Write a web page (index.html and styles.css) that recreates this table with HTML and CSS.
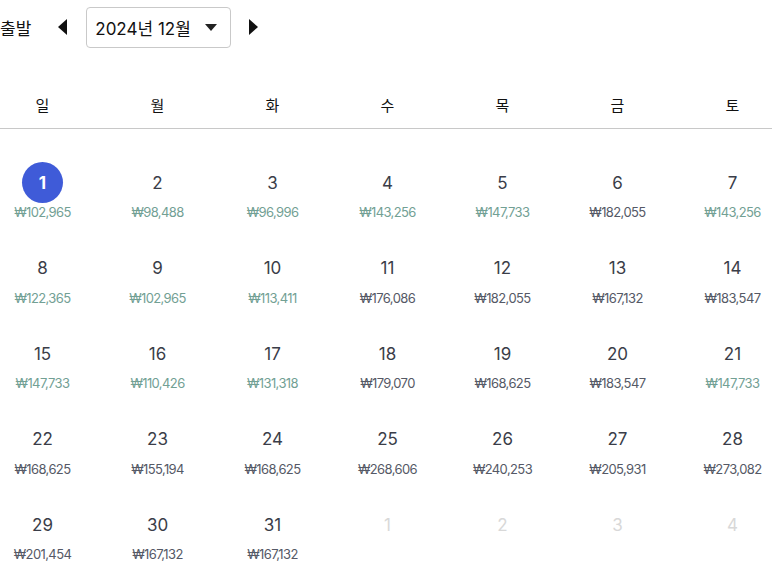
FILE: index.html
```html
<!DOCTYPE html>
<html lang="ko">
<head>
<meta charset="utf-8">
<link rel="stylesheet" href="styles.css">
</head>
<body>
<div class="top">
  <span class="label">출발</span>
  <button class="nav">
    <svg width="10" height="16" viewBox="0 0 10 16"><path d="M10 0 L10 16 L1 8 Z" fill="#111"/></svg>
  </button>
  <div class="select">
    <span>2024년 12월</span>
    <svg class="caret" width="12" height="7" viewBox="0 0 12 7"><path d="M0 0 H12 L6 7 Z" fill="#222"/></svg>
  </div>
  <button class="nav">
    <svg width="10" height="16" viewBox="0 0 10 16"><path d="M0 0 L0 16 L9 8 Z" fill="#111"/></svg>
  </button>
</div>

<div class="cal">
  <div class="weekdays">
    <div>일</div><div>월</div><div>화</div><div>수</div><div>목</div><div>금</div><div>토</div>
  </div>
  <div class="days">
    <div class="cell"><span class="num sel">1</span><span class="price low">₩102,965</span></div>
    <div class="cell"><span class="num">2</span><span class="price low">₩98,488</span></div>
    <div class="cell"><span class="num">3</span><span class="price low">₩96,996</span></div>
    <div class="cell"><span class="num">4</span><span class="price low">₩143,256</span></div>
    <div class="cell"><span class="num">5</span><span class="price low">₩147,733</span></div>
    <div class="cell"><span class="num">6</span><span class="price">₩182,055</span></div>
    <div class="cell"><span class="num">7</span><span class="price low">₩143,256</span></div>

    <div class="cell"><span class="num">8</span><span class="price low">₩122,365</span></div>
    <div class="cell"><span class="num">9</span><span class="price low">₩102,965</span></div>
    <div class="cell"><span class="num">10</span><span class="price low">₩113,411</span></div>
    <div class="cell"><span class="num">11</span><span class="price">₩176,086</span></div>
    <div class="cell"><span class="num">12</span><span class="price">₩182,055</span></div>
    <div class="cell"><span class="num">13</span><span class="price">₩167,132</span></div>
    <div class="cell"><span class="num">14</span><span class="price">₩183,547</span></div>

    <div class="cell"><span class="num">15</span><span class="price low">₩147,733</span></div>
    <div class="cell"><span class="num">16</span><span class="price low">₩110,426</span></div>
    <div class="cell"><span class="num">17</span><span class="price low">₩131,318</span></div>
    <div class="cell"><span class="num">18</span><span class="price">₩179,070</span></div>
    <div class="cell"><span class="num">19</span><span class="price">₩168,625</span></div>
    <div class="cell"><span class="num">20</span><span class="price">₩183,547</span></div>
    <div class="cell"><span class="num">21</span><span class="price low">₩147,733</span></div>

    <div class="cell"><span class="num">22</span><span class="price">₩168,625</span></div>
    <div class="cell"><span class="num">23</span><span class="price">₩155,194</span></div>
    <div class="cell"><span class="num">24</span><span class="price">₩168,625</span></div>
    <div class="cell"><span class="num">25</span><span class="price">₩268,606</span></div>
    <div class="cell"><span class="num">26</span><span class="price">₩240,253</span></div>
    <div class="cell"><span class="num">27</span><span class="price">₩205,931</span></div>
    <div class="cell"><span class="num">28</span><span class="price">₩273,082</span></div>

    <div class="cell"><span class="num">29</span><span class="price">₩201,454</span></div>
    <div class="cell"><span class="num">30</span><span class="price">₩167,132</span></div>
    <div class="cell"><span class="num">31</span><span class="price">₩167,132</span></div>
    <div class="cell"><span class="num out">1</span></div>
    <div class="cell"><span class="num out">2</span></div>
    <div class="cell"><span class="num out">3</span></div>
    <div class="cell"><span class="num out">4</span></div>
  </div>
</div>
</body>
</html>
```

FILE: styles.css
```css
html, body {
  margin: 0;
  padding: 0;
  background: #fff;
  overflow: hidden;
}
body {
  font-family: Inter, "Noto Sans CJK KR", sans-serif;
  color: #222;
  width: 772px;
  height: 575px;
}
.top {
  display: flex;
  align-items: center;
  height: 54px;
}
.label {
  font-size: 17px;
  color: #111;
  margin-right: 25px;
  margin-left: 0;
}
.nav {
  border: 0;
  background: none;
  padding: 0;
  width: 12px;
  height: 16px;
  display: flex;
  align-items: center;
  justify-content: center;
}
.select {
  box-sizing: border-box;
  width: 145px;
  height: 41px;
  margin: 0 17px 0 18px;
  border: 1px solid #c9c9c9;
  border-radius: 4px;
  display: flex;
  align-items: center;
  justify-content: space-between;
  padding: 0 13px 0 8px;
  font-size: 17px;
  color: #111;
}
.cal {
  margin-left: -15px;
  width: 805px;
}
.weekdays {
  display: grid;
  grid-template-columns: repeat(7, 115px);
  margin-top: 38px;
  height: 36px;
  border-bottom: 1px solid #c8c8c8;
  font-size: 15px;
  color: #111;
}
.weekdays div {
  text-align: center;
  line-height: 28px;
}
.days {
  display: grid;
  grid-template-columns: repeat(7, 115px);
  grid-auto-rows: 85.5px;
  padding-top: 33px;
}
.cell {
  display: flex;
  flex-direction: column;
  align-items: center;
}
.num {
  width: 41px;
  height: 41px;
  border-radius: 50%;
  display: flex;
  align-items: center;
  justify-content: center;
  font-size: 17px;
  color: #3a3d48;
}
.num.sel {
  background: #3f5bd8;
  color: #fff;
  font-weight: 700;
}
.num.out {
  color: #d8d8d8;
}
.price {
  font-size: 13px;
  letter-spacing: -0.6px;
  line-height: 16px;
  color: #555966;
  margin-top: 1px;
}
.price.low {
  color: #72a094;
}
```
